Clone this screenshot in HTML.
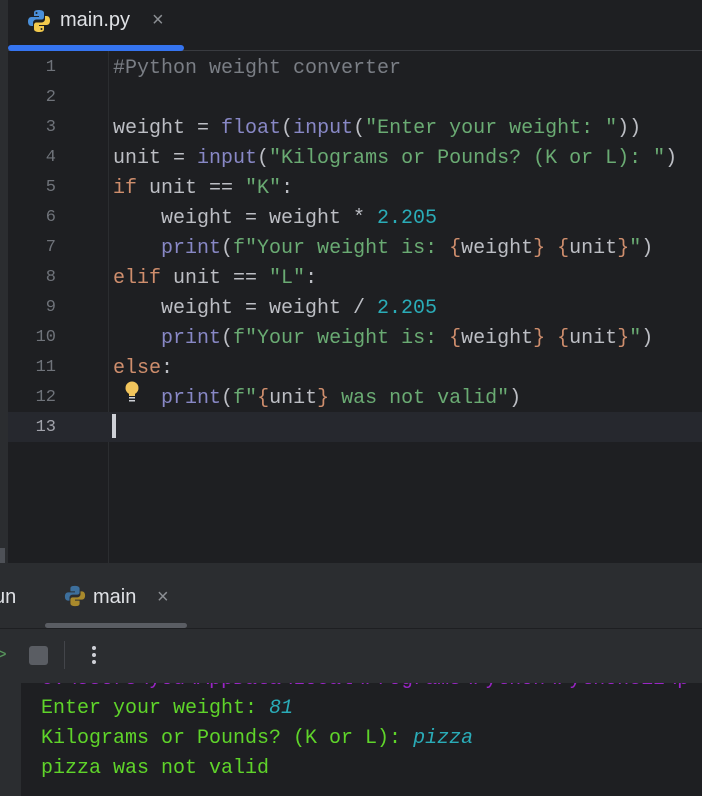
<!DOCTYPE html>
<html><head><style>
*{margin:0;padding:0;box-sizing:border-box}
body{width:702px;height:796px;background:#1e1f22;position:relative;overflow:hidden;font-family:"Liberation Mono",monospace}
.abs{position:absolute}
.code{position:absolute;left:113px;font-size:20px;color:#bcbec4;white-space:pre;line-height:30px}
.ln{position:absolute;left:0;width:56px;text-align:right;font-size:17px;color:#6f737a;line-height:30px}
.k{color:#cf8e6d}.s{color:#6aab73}.n{color:#2aacb8}.b{color:#8888c6}.c{color:#7a7e85}
.con{position:absolute;left:41px;font-size:20px;color:#5fd42a;white-space:pre;line-height:30px}
.i{color:#2aacb8;font-style:italic}
</style></head><body>
<div class="abs" style="left:0;top:0;width:8px;height:563px;background:#2b2d30"></div>
<div class="abs" style="left:8px;top:50px;width:694px;height:1px;background:#393b40"></div>
<svg class="abs" style="left:27px;top:9px" width="24" height="24" viewBox="0 0 24 24"><path d="M11.5 1C7 1 7 3 7 4v3h5v1H4.5C2 8 1 10 1 12.5S2 17 4.5 17H6v-3c0-2 1.5-3.5 3.5-3.5h5c1.5 0 2.5-1 2.5-2.5V4c0-2-2-3-5.5-3z" fill="#4a8fd9"/><path d="M12.5 23c4.5 0 4.5-2 4.5-3v-3h-5v-1h7.5c2.5 0 3.5-2 3.5-4.5S22 7 19.5 7H18v3c0 2-1.5 3.5-3.5 3.5h-5C8 13.5 7 14.5 7 16v4c0 2 2 3 5.5 3z" fill="#f2c94c"/><circle cx="9.5" cy="4" r="1" fill="#1e1f22"/><circle cx="14.5" cy="20" r="1" fill="#1e1f22"/></svg>
<div class="abs" style="left:60px;top:9px;font-family:'Liberation Sans',sans-serif;font-size:20px;color:#dfe1e5">main.py</div>
<div class="abs" style="left:152px;top:9px;font-family:'Liberation Sans',sans-serif;font-size:20px;color:#8c8f94">×</div>
<div class="abs" style="left:8px;top:45px;width:176px;height:6px;border-radius:3px;background:#3574f0"></div>
<div class="abs" style="left:108px;top:51px;width:1px;height:512px;background:#2b2d30"></div>
<div class="abs" style="left:8px;top:412px;width:694px;height:30px;background:#26282e"></div>
<div class="abs" style="left:112px;top:414px;width:4px;height:24px;background:#ced0d6"></div>
<div class="ln" style="top:53px">1<br>2<br>3<br>4<br>5<br>6<br>7<br>8<br>9<br>10<br>11<br>12<br><span style="color:#a1a3ab">13</span></div>
<div class="code" style="top:54px"><span class="c">#Python weight converter</span>

weight = <span class="b">float</span>(<span class="b">input</span>(<span class="s">"Enter your weight: "</span>))
unit = <span class="b">input</span>(<span class="s">"Kilograms or Pounds? (K or L): "</span>)
<span class="k">if</span> unit == <span class="s">"K"</span>:
    weight = weight * <span class="n">2.205</span>
    <span class="b">print</span>(<span class="s">f"Your weight is: </span><span class="k">{</span>weight<span class="k">}</span><span class="s"> </span><span class="k">{</span>unit<span class="k">}</span><span class="s">"</span>)
<span class="k">elif</span> unit == <span class="s">"L"</span>:
    weight = weight / <span class="n">2.205</span>
    <span class="b">print</span>(<span class="s">f"Your weight is: </span><span class="k">{</span>weight<span class="k">}</span><span class="s"> </span><span class="k">{</span>unit<span class="k">}</span><span class="s">"</span>)
<span class="k">else</span>:
    <span class="b">print</span>(<span class="s">f"</span><span class="k">{</span>unit<span class="k">}</span><span class="s"> was not valid"</span>)
</div>
<svg class="abs" style="left:124px;top:381px" width="16" height="24" viewBox="0 0 16 24"><circle cx="8" cy="7" r="6.5" fill="#f2c55c"/><rect x="5" y="11" width="6" height="4" fill="#f2c55c"/><rect x="5" y="16" width="6" height="1.5" fill="#ced0d6"/><rect x="5" y="19" width="6" height="1.5" fill="#ced0d6"/></svg>
<div class="abs" style="left:0;top:548px;width:5px;height:15px;background:#4e5157"></div>
<div class="abs" style="left:0;top:563px;width:702px;height:120px;background:#2b2d30"></div>
<div class="abs" style="left:-6px;top:586px;font-family:'Liberation Sans',sans-serif;font-size:20px;color:#dfe1e5">un</div>
<svg class="abs" style="left:64px;top:585px" width="22" height="22" viewBox="0 0 24 24"><path d="M11.5 1C7 1 7 3 7 4v3h5v1H4.5C2 8 1 10 1 12.5S2 17 4.5 17H6v-3c0-2 1.5-3.5 3.5-3.5h5c1.5 0 2.5-1 2.5-2.5V4c0-2-2-3-5.5-3z" fill="#3d6f9c"/><path d="M12.5 23c4.5 0 4.5-2 4.5-3v-3h-5v-1h7.5c2.5 0 3.5-2 3.5-4.5S22 7 19.5 7H18v3c0 2-1.5 3.5-3.5 3.5h-5C8 13.5 7 14.5 7 16v4c0 2 2 3 5.5 3z" fill="#a8892c"/></svg>
<div class="abs" style="left:93px;top:586px;font-family:'Liberation Sans',sans-serif;font-size:20px;color:#dfe1e5">main</div>
<div class="abs" style="left:157px;top:586px;font-family:'Liberation Sans',sans-serif;font-size:20px;color:#8c8f94">×</div>
<div class="abs" style="left:45px;top:623px;width:142px;height:5px;border-radius:3px;background:#5a5d63"></div>
<div class="abs" style="left:0;top:628px;width:702px;height:1px;background:#1e1f22"></div>
<div class="abs" style="left:-4px;top:646px;font-size:18px;color:#57965c">&gt;</div>
<div class="abs" style="left:29px;top:646px;width:19px;height:19px;border-radius:3px;background:#5a5d63"></div>
<div class="abs" style="left:64px;top:641px;width:1px;height:28px;background:#43454a"></div>
<div class="abs" style="left:92px;top:646px;width:4px;height:4px;border-radius:2px;background:#ced0d6;box-shadow:0 7px 0 #ced0d6,0 14px 0 #ced0d6"></div>
<div class="abs" style="left:0;top:683px;width:21px;height:113px;background:#2b2d30"></div>
<div class="abs" style="left:22px;top:683px;width:680px;height:7px;overflow:hidden"><div style="position:absolute;top:-15px;left:19px;font-size:20px;color:#9a25c6;white-space:pre">C:\Users\you\AppData\Local\Programs\Python\Python312\p</div></div>
<div class="con" style="top:694px">Enter your weight: <span class="i">81</span>
Kilograms or Pounds? (K or L): <span class="i">pizza</span>
pizza was not valid</div>
</body></html>
